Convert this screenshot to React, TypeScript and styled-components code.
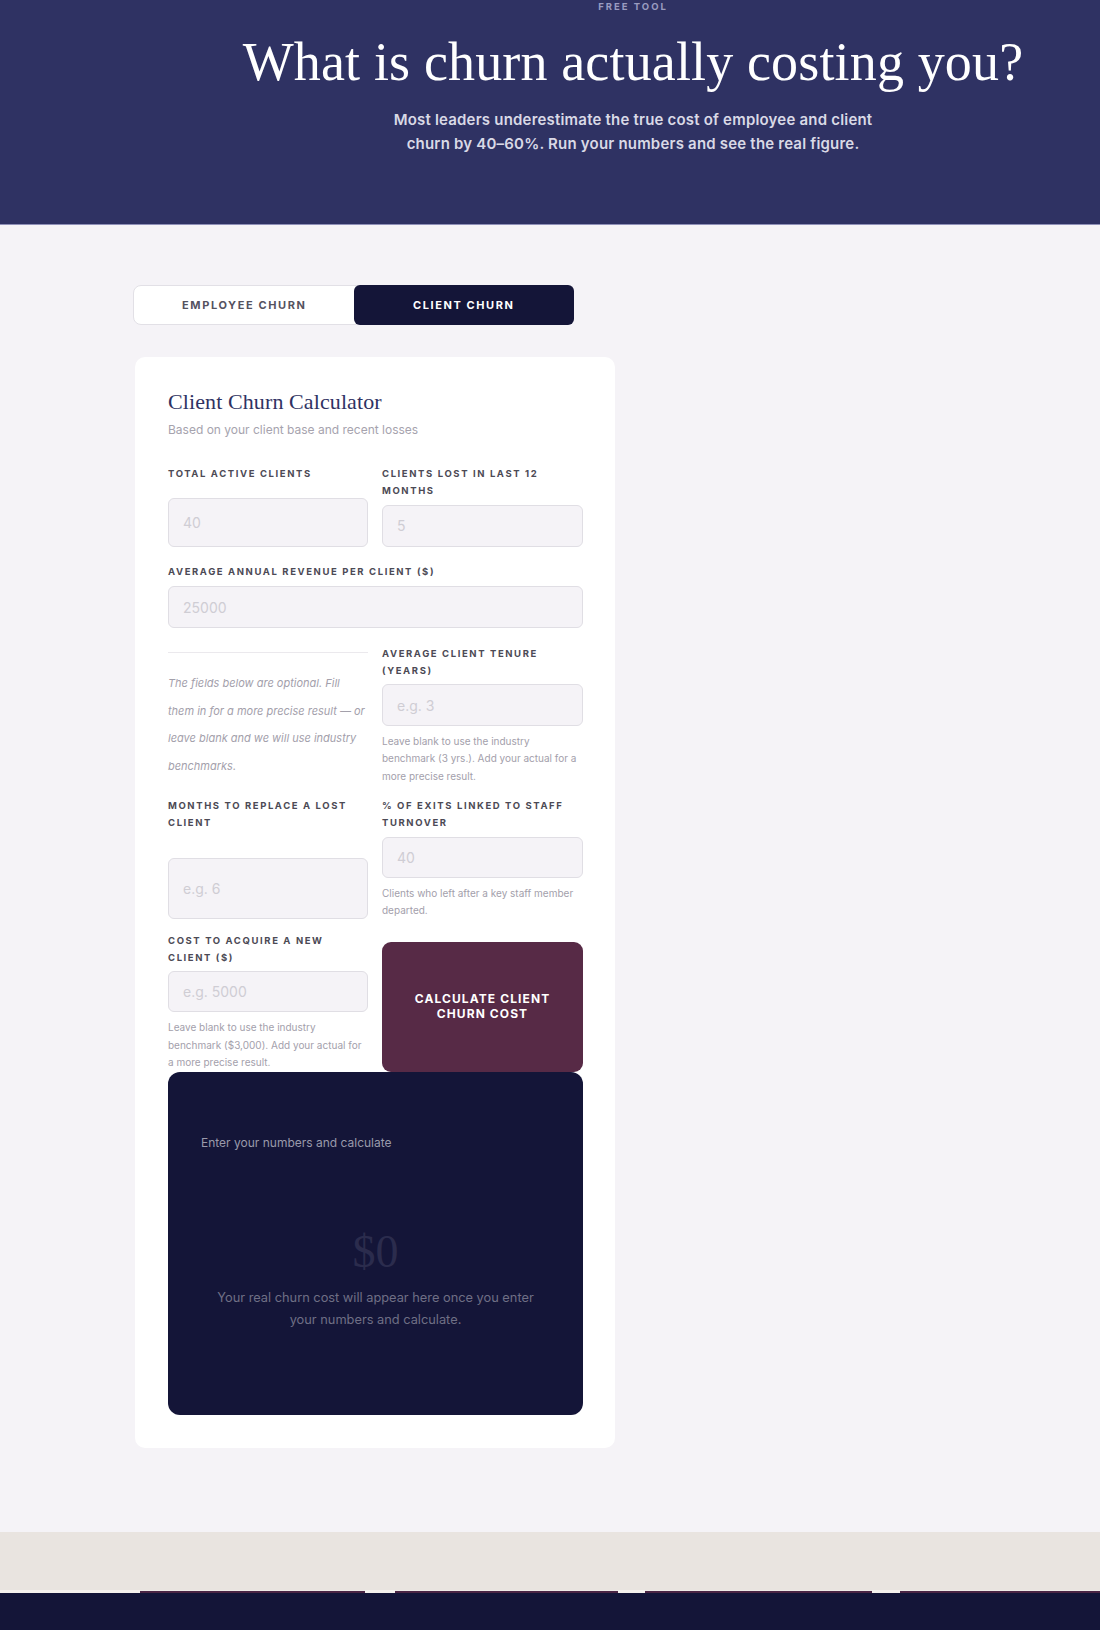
import styled, { createGlobalStyle } from "styled-components";

const GlobalStyle = createGlobalStyle`
  * { box-sizing: border-box; }
  body {
    margin: 0;
    background: #f5f3f7;
    font-family: "Inter", "Liberation Sans", sans-serif;
  }
`;

const Page = styled.div`
  width: 1100px;
  height: 1630px;
  overflow: hidden;
  display: flex;
  flex-direction: column;
`;

const Hero = styled.header`
  height: 225px;
  padding-left: 166px;
  background: #2f3263;
  border-bottom: 1px solid #8f90b8;
  text-align: center;
  white-space: nowrap;
`;

const Eyebrow = styled.div`
  height: 14px;
  line-height: 14px;
  font-size: 9.5px;
  font-weight: 700;
  letter-spacing: 2px;
  color: #9a9cc0;
`;

const HeroTitle = styled.h1`
  margin: 17px 0 0;
  height: 62px;
  line-height: 62px;
  font-family: "Liberation Serif", serif;
  font-size: 54px;
  font-weight: 400;
  letter-spacing: 0.15px;
  color: #ffffff;
`;

const HeroText = styled.p`
  margin: 15px 0 0;
  font-size: 15px;
  font-weight: 600;
  line-height: 24px;
  letter-spacing: 0.2px;
  color: #d9d9e6;
`;

const Main = styled.main`
  flex: 1;
  padding: 60px 0 0 135px;
`;

const Tabs = styled.div`
  display: flex;
  width: 441px;
  height: 40px;
  margin-left: -2px;
  border: 1px solid #e2e0e6;
  border-radius: 8px;
  background: #ffffff;
`;

const Tab = styled.button<{ $active?: boolean }>`
  flex: 1;
  margin: ${(p) => (p.$active ? "-1px" : "0")};
  border: none;
  border-radius: ${(p) => (p.$active ? "6px" : "8px")};
  background: ${(p) => (p.$active ? "#141538" : "transparent")};
  color: ${(p) => (p.$active ? "#ffffff" : "#55525f")};
  font-family: inherit;
  font-size: 11px;
  font-weight: 700;
  letter-spacing: 1.6px;
`;

const Card = styled.section`
  width: 480px;
  height: 1091px;
  margin-top: 32px;
  padding: 34px 32px 33px 33px;
  border-radius: 10px;
  background: #ffffff;
`;

const CardTitle = styled.h2`
  margin: 0;
  height: 21px;
  line-height: 21px;
  font-family: "Liberation Serif", serif;
  font-size: 22px;
  font-weight: 400;
  letter-spacing: 0.1px;
  color: #2f3263;
  white-space: nowrap;
`;

const CardSub = styled.p`
  margin: 11px 0 0;
  height: 14px;
  line-height: 14px;
  font-size: 12px;
  color: #a6a3ae;
`;

const FormGrid = styled.div`
  display: grid;
  grid-template-columns: 200px 201px;
  column-gap: 14px;
  row-gap: 11.5px;
  margin-top: 27.5px;
`;

const Field = styled.div<{ $wide?: boolean; $bottom?: number }>`
  display: flex;
  flex-direction: column;
  grid-column: ${(p) => (p.$wide ? "1 / -1" : "auto")};
  padding-bottom: ${(p) => p.$bottom ?? 0}px;
`;

const Label = styled.label`
  display: block;
  line-height: 17px;
  font-size: 9.5px;
  font-weight: 700;
  letter-spacing: 1.6px;
  color: #4c4a55;
`;

const Input = styled.div<{ $height?: number; $top?: number }>`
  display: flex;
  align-items: center;
  flex: none;
  height: ${(p) => p.$height ?? 42}px;
  margin-top: ${(p) => p.$top ?? 5.5}px;
  padding-left: 14px;
  border: 1.5px solid #e0dee4;
  border-radius: 6px;
  background: #f5f3f7;
  font-size: 14px;
  color: #cfcdd4;
`;

const Help = styled.p`
  margin: 7px 0 0;
  font-size: 10px;
  line-height: 17.3px;
  color: #a3a0ab;
`;

const Divider = styled.div`
  height: 1px;
  margin-top: 7.5px;
  background: #ebe9ed;
`;

const Note = styled.p`
  margin: 17px 0 0;
  font-size: 11px;
  font-style: italic;
  line-height: 27.6px;
  color: #a3a0ab;
`;

const CalcButton = styled.button`
  height: 129.5px;
  margin-top: 10.5px;
  padding: 0 30px 3px;
  border: none;
  border-radius: 9px;
  background: #572a46;
  color: #ffffff;
  font-family: inherit;
  font-size: 12px;
  font-weight: 700;
  line-height: 15px;
  letter-spacing: 1.1px;
`;

const Result = styled.div`
  height: 343px;
  padding: 61px 33px 0;
  border-radius: 12px;
  background: #141538;
`;

const ResultLabel = styled.div`
  height: 20px;
  line-height: 20px;
  font-size: 12px;
  color: #9a9aab;
`;

const ResultValue = styled.div`
  margin-top: 77px;
  height: 44px;
  line-height: 44px;
  text-align: center;
  font-family: "Liberation Serif", serif;
  font-size: 46px;
  color: #2b2c4d;
`;

const ResultText = styled.p`
  margin: 13px auto 0;
  width: 340px;
  font-size: 12.8px;
  line-height: 22px;
  text-align: center;
  color: #6f6f85;
`;

const FooterBand = styled.div`
  height: 58px;
  background: #e9e4e0;
`;

const FooterRule = styled.div`
  display: grid;
  grid-template-columns: 140px 225px 30px 223px 27px 227px 28px 200px;
  height: 3px;
  background: #e9e4e0;
`;

const RuleSegment = styled.span<{ $light?: boolean }>`
  border-top: 1px solid ${(p) => (p.$light ? "#f6f2ee" : "#efebe7")};
  background: ${(p) => (p.$light ? "#f6f2ee" : "#4b2544")};
`;

const Footer = styled.footer`
  height: 37px;
  background: #141538;
`;

const segments = [true, false, true, false, true, false, true, false];

export default function App() {
  return (
    <>
      <GlobalStyle />
      <Page>
        <Hero>
          <Eyebrow>FREE TOOL</Eyebrow>
          <HeroTitle>What is churn actually costing you?</HeroTitle>
          <HeroText>
            Most leaders underestimate the true cost of employee and client
            <br />
            churn by 40–60%. Run your numbers and see the real figure.
          </HeroText>
        </Hero>
        <Main>
          <Tabs>
            <Tab>EMPLOYEE CHURN</Tab>
            <Tab $active>CLIENT CHURN</Tab>
          </Tabs>
          <Card>
            <CardTitle>Client Churn Calculator</CardTitle>
            <CardSub>Based on your client base and recent losses</CardSub>
            <FormGrid>
              <Field $bottom={5}>
                <Label>TOTAL ACTIVE CLIENTS</Label>
                <Input $height={49} $top={16}>40</Input>
              </Field>
              <Field $bottom={5}>
                <Label>CLIENTS LOST IN LAST 12 MONTHS</Label>
                <Input $top={6}>5</Input>
              </Field>
              <Field $wide $bottom={5}>
                <Label>AVERAGE ANNUAL REVENUE PER CLIENT ($)</Label>
                <Input $top={6}>25000</Input>
              </Field>
              <Field>
                <Divider />
                <Note>
                  The fields below are optional. Fill them in for a more precise
                  result — or leave blank and we will use industry benchmarks.
                </Note>
              </Field>
              <Field $bottom={1}>
                <Label>AVERAGE CLIENT TENURE (YEARS)</Label>
                <Input>e.g. 3</Input>
                <Help>
                  Leave blank to use the industry benchmark (3 yrs.). Add your
                  actual for a more precise result.
                </Help>
              </Field>
              <Field $bottom={1}>
                <Label>MONTHS TO REPLACE A LOST CLIENT</Label>
                <Input $height={61} $top={27}>e.g. 6</Input>
              </Field>
              <Field $bottom={1}>
                <Label>% OF EXITS LINKED TO STAFF TURNOVER</Label>
                <Input $height={41}>40</Input>
                <Help>Clients who left after a key staff member departed.</Help>
              </Field>
              <Field>
                <Label>COST TO ACQUIRE A NEW CLIENT ($)</Label>
                <Input $height={41}>e.g. 5000</Input>
                <Help>
                  Leave blank to use the industry benchmark ($3,000). Add your
                  actual for a more precise result.
                </Help>
              </Field>
              <CalcButton>CALCULATE CLIENT CHURN COST</CalcButton>
            </FormGrid>
            <Result>
              <ResultLabel>Enter your numbers and calculate</ResultLabel>
              <ResultValue>$0</ResultValue>
              <ResultText>
                Your real churn cost will appear here once you enter your
                numbers and calculate.
              </ResultText>
            </Result>
          </Card>
        </Main>
        <FooterBand />
        <FooterRule>
          {segments.map((light, i) => (
            <RuleSegment key={i} $light={light} />
          ))}
        </FooterRule>
        <Footer />
      </Page>
    </>
  );
}
